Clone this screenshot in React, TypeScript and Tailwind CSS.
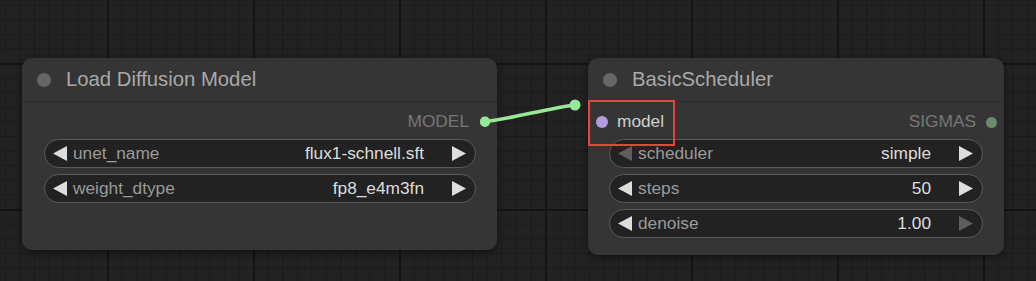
import React from "react";

type WidgetProps = {
  label: string;
  value: string;
  dimLeft?: boolean;
  dimRight?: boolean;
};

function Arrow({ dir, dim }: { dir: "left" | "right"; dim?: boolean }) {
  return (
    <svg width="14" height="15" viewBox="0 0 14 15" className="shrink-0">
      <polygon
        points={dir === "left" ? "14,0 14,15 0,7.5" : "0,0 0,15 14,7.5"}
        fill={dim ? "#5e5e5e" : "#dddddd"}
      />
    </svg>
  );
}

function Widget({ label, value, dimLeft, dimRight }: WidgetProps) {
  return (
    <div className="flex h-[29px] items-center rounded-full border border-[#5a5a5a] bg-[#222222] pl-[8px] pr-[9px] text-[17.3px] leading-none">
      <Arrow dir="left" dim={dimLeft} />
      <span className="ml-[6px] flex-1 text-[#9a9a9a]">{label}</span>
      <span className="mr-[28px] text-[#dddddd]">{value}</span>
      <Arrow dir="right" dim={dimRight} />
    </div>
  );
}

function NodeTitle({ title }: { title: string }) {
  return (
    <div className="flex h-[44px] items-center border-b border-[#2c2c2c] pl-[15px]">
      <span className="h-[14px] w-[14px] rounded-full bg-[#666666]" />
      <span className="ml-[15px] text-[20.3px] leading-none text-[#a9a9a9]">{title}</span>
    </div>
  );
}

export default function App() {
  return (
    <div className="relative h-[281px] w-[1036px] overflow-hidden bg-[#222222] font-['Liberation_Sans',Arial,sans-serif]">
      <svg className="absolute inset-0" width="1036" height="281">
        <defs>
          <pattern id="minor" x="4.8" y="4.6" width="14.6" height="14.6" patternUnits="userSpaceOnUse">
            <path d="M0 0.5 H14.6 M0.5 0 V14.6" stroke="#1b1b1b" strokeWidth="1" />
          </pattern>
          <pattern id="major" x="107" y="63" width="146" height="146" patternUnits="userSpaceOnUse">
            <path d="M0 1 H146 M1 0 V146" stroke="#141414" strokeWidth="2" />
          </pattern>
        </defs>
        <rect width="1036" height="281" fill="url(#minor)" />
        <rect width="1036" height="281" fill="url(#major)" />
      </svg>

      {/* Load Diffusion Model */}
      <div className="absolute left-[22px] top-[58px] flex h-[192px] w-[475px] flex-col rounded-[10px] bg-[#353535] shadow-[0_2px_8px_rgba(0,0,0,0.45)]">
        <NodeTitle title="Load Diffusion Model" />
        <div className="mt-[5px] flex h-[30px] items-center justify-end pr-[7px]">
          <span className="text-[17.3px] leading-none text-[#767676]">MODEL</span>
          <span className="ml-[11px] h-[10px] w-[10px] rounded-full bg-[#97e897]" />
        </div>
        <div className="mt-[2px] flex flex-col gap-[6px] pl-[22px] pr-[21px]">
          <Widget label="unet_name" value="flux1-schnell.sft" />
          <Widget label="weight_dtype" value="fp8_e4m3fn" />
        </div>
      </div>

      {/* BasicScheduler */}
      <div className="absolute left-[588px] top-[58px] flex h-[197px] w-[416px] flex-col rounded-[10px] bg-[#353535] shadow-[0_2px_8px_rgba(0,0,0,0.45)]">
        <NodeTitle title="BasicScheduler" />
        <div className="mt-[5px] flex h-[30px] items-center pl-[8px] pr-[7px]">
          <span className="h-[12px] w-[12px] rounded-full bg-[#b49ce0]" />
          <span className="ml-[9px] flex-1 text-[17.3px] leading-none text-[#d0d0d0]">model</span>
          <span className="text-[17.3px] leading-none text-[#767676]">SIGMAS</span>
          <span className="ml-[10px] h-[11px] w-[11px] rounded-full bg-[#6d8a6d]" />
        </div>
        <div className="mt-[2px] flex flex-col gap-[6px] px-[21px]">
          <Widget label="scheduler" value="simple" dimLeft />
          <Widget label="steps" value="50" />
          <Widget label="denoise" value="1.00" dimRight />
        </div>
      </div>

      {/* link */}
      <svg className="pointer-events-none absolute inset-0" width="1036" height="281">
        <path d="M485 121.5 C505 120 550 108 575 105" stroke="#97e897" strokeWidth="3.5" fill="none" strokeLinecap="round" />
        <circle cx="575" cy="105" r="5.5" fill="#97e897" />
        <circle cx="485" cy="121.5" r="5" fill="#97e897" />
      </svg>

      {/* highlight */}
      <div className="pointer-events-none absolute left-[588px] top-[100px] h-[46px] w-[87px] border-2 border-[#e5453c]" />
    </div>
  );
}
